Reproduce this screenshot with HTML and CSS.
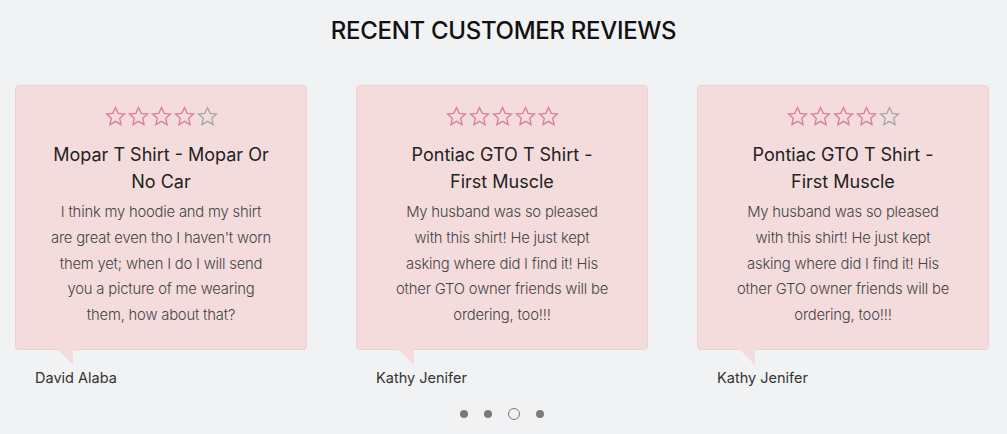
FILE: index.html
```html
<!DOCTYPE html>
<html>
<head>
<meta charset="utf-8">
<link rel="stylesheet" href="styles.css">
</head>
<body>
<section class="reviews">
  <h2 class="heading">RECENT CUSTOMER REVIEWS</h2>
  <div class="track">
    <div class="item">
      <div class="card">
        <div class="stars">
          <svg class="star on" viewBox="0 0 24 24"><path d="M12 2.6l2.8 6.1 6.6.7-5 4.5 1.4 6.6L12 17.1l-5.8 3.4 1.4-6.6-5-4.5 6.6-.7z"/></svg>
          <svg class="star on" viewBox="0 0 24 24"><path d="M12 2.6l2.8 6.1 6.6.7-5 4.5 1.4 6.6L12 17.1l-5.8 3.4 1.4-6.6-5-4.5 6.6-.7z"/></svg>
          <svg class="star on" viewBox="0 0 24 24"><path d="M12 2.6l2.8 6.1 6.6.7-5 4.5 1.4 6.6L12 17.1l-5.8 3.4 1.4-6.6-5-4.5 6.6-.7z"/></svg>
          <svg class="star on" viewBox="0 0 24 24"><path d="M12 2.6l2.8 6.1 6.6.7-5 4.5 1.4 6.6L12 17.1l-5.8 3.4 1.4-6.6-5-4.5 6.6-.7z"/></svg>
          <svg class="star off" viewBox="0 0 24 24"><path d="M12 2.6l2.8 6.1 6.6.7-5 4.5 1.4 6.6L12 17.1l-5.8 3.4 1.4-6.6-5-4.5 6.6-.7z"/></svg>
        </div>
        <h3 class="title">Mopar T Shirt - Mopar Or No Car</h3>
        <p class="text">I think my hoodie and my shirt are great even tho I haven't worn them yet; when I do I will send you a picture of me wearing them, how about that?</p>
      </div>
      <div class="author">David Alaba</div>
    </div>
    <div class="item">
      <div class="card">
        <div class="stars">
          <svg class="star on" viewBox="0 0 24 24"><path d="M12 2.6l2.8 6.1 6.6.7-5 4.5 1.4 6.6L12 17.1l-5.8 3.4 1.4-6.6-5-4.5 6.6-.7z"/></svg>
          <svg class="star on" viewBox="0 0 24 24"><path d="M12 2.6l2.8 6.1 6.6.7-5 4.5 1.4 6.6L12 17.1l-5.8 3.4 1.4-6.6-5-4.5 6.6-.7z"/></svg>
          <svg class="star on" viewBox="0 0 24 24"><path d="M12 2.6l2.8 6.1 6.6.7-5 4.5 1.4 6.6L12 17.1l-5.8 3.4 1.4-6.6-5-4.5 6.6-.7z"/></svg>
          <svg class="star on" viewBox="0 0 24 24"><path d="M12 2.6l2.8 6.1 6.6.7-5 4.5 1.4 6.6L12 17.1l-5.8 3.4 1.4-6.6-5-4.5 6.6-.7z"/></svg>
          <svg class="star on" viewBox="0 0 24 24"><path d="M12 2.6l2.8 6.1 6.6.7-5 4.5 1.4 6.6L12 17.1l-5.8 3.4 1.4-6.6-5-4.5 6.6-.7z"/></svg>
        </div>
        <h3 class="title">Pontiac GTO T Shirt - First Muscle</h3>
        <p class="text">My husband was so pleased with this shirt! He just kept asking where did I find it! His other GTO owner friends will be ordering, too!!!</p>
      </div>
      <div class="author">Kathy Jenifer</div>
    </div>
    <div class="item">
      <div class="card">
        <div class="stars">
          <svg class="star on" viewBox="0 0 24 24"><path d="M12 2.6l2.8 6.1 6.6.7-5 4.5 1.4 6.6L12 17.1l-5.8 3.4 1.4-6.6-5-4.5 6.6-.7z"/></svg>
          <svg class="star on" viewBox="0 0 24 24"><path d="M12 2.6l2.8 6.1 6.6.7-5 4.5 1.4 6.6L12 17.1l-5.8 3.4 1.4-6.6-5-4.5 6.6-.7z"/></svg>
          <svg class="star on" viewBox="0 0 24 24"><path d="M12 2.6l2.8 6.1 6.6.7-5 4.5 1.4 6.6L12 17.1l-5.8 3.4 1.4-6.6-5-4.5 6.6-.7z"/></svg>
          <svg class="star on" viewBox="0 0 24 24"><path d="M12 2.6l2.8 6.1 6.6.7-5 4.5 1.4 6.6L12 17.1l-5.8 3.4 1.4-6.6-5-4.5 6.6-.7z"/></svg>
          <svg class="star off" viewBox="0 0 24 24"><path d="M12 2.6l2.8 6.1 6.6.7-5 4.5 1.4 6.6L12 17.1l-5.8 3.4 1.4-6.6-5-4.5 6.6-.7z"/></svg>
        </div>
        <h3 class="title">Pontiac GTO T Shirt - First Muscle</h3>
        <p class="text">My husband was so pleased with this shirt! He just kept asking where did I find it! His other GTO owner friends will be ordering, too!!!</p>
      </div>
      <div class="author">Kathy Jenifer</div>
    </div>
  </div>
  <div class="dots">
    <span class="dot"></span>
    <span class="dot"></span>
    <span class="dot active"></span>
    <span class="dot"></span>
  </div>
</section>
</body>
</html>
```

FILE: styles.css
```css
html, body {
  margin: 0;
  padding: 0;
}
body {
  background: #f1f2f4;
  font-family: Inter, Roboto, "Liberation Sans", sans-serif;
  width: 1007px;
  height: 434px;
  overflow: hidden;
}
.reviews {
  padding-top: 17px;
}
.heading {
  margin: 0;
  text-align: center;
  font-size: 24px;
  font-weight: 500;
  color: #111;
  line-height: 28px;
  letter-spacing: -0.3px;
}
.track {
  display: flex;
  gap: 49px;
  padding-left: 15px;
  margin-top: 40px;
}
.item {
  width: 292px;
}
.card {
  position: relative;
  box-sizing: border-box;
  height: 265px;
  background: #f4dcdd;
  border: 1px solid #efcfd0;
  border-radius: 4px;
  padding: 19px 30px 0;
  text-align: center;
}
.card::after {
  content: "";
  position: absolute;
  left: 41px;
  bottom: -16px;
  width: 16px;
  height: 16px;
  background: #f4dcdd;
  clip-path: polygon(0 0, 100% 0, 100% 100%);
}
.stars {
  display: flex;
  justify-content: center;
  height: 24px;
}
.star {
  width: 23px;
  height: 23px;
  fill: none;
  stroke-width: 1.4;
  stroke-linejoin: miter;
}
.star.on { stroke: #d87f98; }
.star.off { stroke: #a7a7a7; }
.title {
  margin: 12px 0 0;
  font-size: 18px;
  font-weight: 400;
  line-height: 27px;
  color: #222;
  padding: 0 5px;
}
.text {
  margin: 5px 0 0;
  font-weight: 300;
  font-size: 14.8px;
  line-height: 25.8px;
  color: #444;
  padding: 0 5px;
  letter-spacing: -0.2px;
}
.author {
  margin-top: 19px;
  padding-left: 20px;
  font-size: 14.5px;
  color: #333;
  line-height: 17px;
}
.dots {
  display: flex;
  justify-content: center;
  align-items: center;
  gap: 16px;
  margin-top: 22px;
  padding-right: 4px;
}
.dot {
  width: 8px;
  height: 8px;
  border-radius: 50%;
  background: #7b7b7b;
}
.dot.active {
  box-sizing: border-box;
  width: 12px;
  height: 12px;
  background: transparent;
  border: 1.5px solid #7b7b7b;
}
```
